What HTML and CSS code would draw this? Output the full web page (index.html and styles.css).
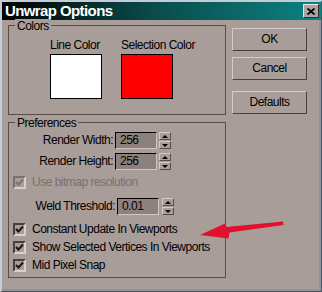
FILE: index.html
```html
<html>
<head>
<meta charset="UTF-8">
<link rel="stylesheet" href="styles.css">
</head>
<body>
<div class="window">
    <div class="titlebar">
        <span class="title">Unwrap Options</span>
        <div class="close">
            <svg width="8" height="7" viewBox="0 0 8 7"><path d="M0.5 0.5 L7.5 6.5 M7.5 0.5 L0.5 6.5" stroke="#000" stroke-width="1.8"/></svg>
        </div>
    </div>
    <div class="content">
        <div class="groups">
            <div class="group colors">
                <span class="legend">Colors</span>
                <div class="swatch_col">
                    <span class="swatch_label">Line Color</span>
                    <div class="swatch white"></div>
                </div>
                <div class="swatch_col">
                    <span class="swatch_label">Selection Color</span>
                    <div class="swatch red"></div>
                </div>
            </div>
            <div class="group prefs">
                <span class="legend">Preferences</span>
                <div class="field first">
                    <span class="field_label">Render Width:</span>
                    <div class="input">256</div>
                    <div class="spinner"><div class="spin up"></div><div class="spin down"></div></div>
                </div>
                <div class="field second">
                    <span class="field_label">Render Height:</span>
                    <div class="input">256</div>
                    <div class="spinner"><div class="spin up"></div><div class="spin down"></div></div>
                </div>
                <div class="check_row disabled bitmap">
                    <div class="checkbox"><svg width="9" height="9" viewBox="0 0 9 9"><polyline points="1,4 3.5,6.5 8,1.5" fill="none" stroke="currentColor" stroke-width="2"/></svg></div>
                    <span>Use bitmap resolution</span>
                </div>
                <div class="field weld">
                    <span class="field_label">Weld Threshold:</span>
                    <div class="input">0.01</div>
                    <div class="spinner"><div class="spin up"></div><div class="spin down"></div></div>
                </div>
                <div class="check_row first_check">
                    <div class="checkbox"><svg width="9" height="9" viewBox="0 0 9 9"><polyline points="1,4 3.5,6.5 8,1.5" fill="none" stroke="currentColor" stroke-width="2"/></svg></div>
                    <span>Constant Update In Viewports</span>
                </div>
                <div class="check_row">
                    <div class="checkbox"><svg width="9" height="9" viewBox="0 0 9 9"><polyline points="1,4 3.5,6.5 8,1.5" fill="none" stroke="currentColor" stroke-width="2"/></svg></div>
                    <span>Show Selected Vertices In Viewports</span>
                </div>
                <div class="check_row">
                    <div class="checkbox"><svg width="9" height="9" viewBox="0 0 9 9"><polyline points="1,4 3.5,6.5 8,1.5" fill="none" stroke="currentColor" stroke-width="2"/></svg></div>
                    <span>Mid Pixel Snap</span>
                </div>
            </div>
        </div>
        <div class="buttons">
            <div class="button ok">OK</div>
            <div class="button cancel">Cancel</div>
            <div class="button defaults">Defaults</div>
        </div>
    </div>
    <!-- annotation arrow drawn over the dialog -->
    <svg class="arrow" width="322" height="292" viewBox="0 0 322 292">
        <polygon points="283,221.5 226.5,227 225,223.5 200,235 228.5,238.5 229.5,232.5 283.5,225" fill="#e2102e"/>
    </svg>
</div>
</body>
</html>
```

FILE: styles.css
```css
* {
    box-sizing: border-box;
}

body {
    margin: 0;
    font-family: "Liberation Sans", Arial, sans-serif;
    font-size: 12px;
    letter-spacing: -0.5px;
    line-height: 15px;
    white-space: nowrap;
    color: #000;
}

.window {
    position: relative;
    width: 322px;
    height: 292px;
    background: #a99d99;
    border-left: 2px solid #c4ccd8;
    border-top: 2px solid #c4ccd8;
    border-right: 1px solid #4c5462;
    border-bottom: 1px solid #4c5462;
    box-shadow: inset -2px -2px 0 #8a94a4;
    overflow: hidden;
}

.titlebar {
    display: flex;
    align-items: center;
    justify-content: space-between;
    height: 18px;
    padding-left: 3px;
    padding-right: 2px;
    background: linear-gradient(to right, #000000, #0a4848 45%, #0c8282);
}

.title {
    color: #fff;
    font-weight: bold;
    font-size: 15px;
    letter-spacing: -0.6px;
    line-height: 18px;
}

.close {
    display: flex;
    align-items: center;
    justify-content: center;
    width: 16px;
    height: 14px;
    background: #aaa4a2;
    border-top: 1px solid #e8e8e8;
    border-left: 1px solid #e8e8e8;
    border-right: 1px solid #303030;
    border-bottom: 1px solid #303030;
}

.content {
    display: flex;
    gap: 6px;
    padding: 5px 0 0 6px;
}

.groups {
    display: flex;
    flex-direction: column;
    gap: 7px;
    width: 218px;
}

.group {
    position: relative;
    border: 1px solid #5c4c48;
}

.legend {
    position: absolute;
    top: -7px;
    left: 6px;
    padding: 0 2px;
    background: #a99d99;
}

.colors {
    display: flex;
    gap: 19px;
    height: 90px;
    padding: 12px 0 0 41px;
}

.swatch_col {
    display: flex;
    flex-direction: column;
    gap: 1px;
}

.swatch {
    width: 52px;
    height: 45px;
    border: 1px solid #000;
}

.white {
    background: #fff;
}

.red {
    background: #ff0000;
}

.prefs {
    height: 156px;
    padding: 9px 0 0 0;
}

.field {
    display: flex;
    align-items: center;
    height: 17px;
}

.second {
    margin-top: 4px;
}

.weld {
    margin-top: 8px;
}

.field_label {
    width: 104px;
    text-align: right;
    margin-right: 2px;
}

.weld .field_label {
    width: 106px;
}

.input {
    width: 42px;
    height: 17px;
    padding-left: 4px;
    background: #8d807d;
    border-top: 1px solid #000;
    border-left: 1px solid #000;
    border-right: 1px solid #d2c6c2;
    border-bottom: 1px solid #d2c6c2;
}

.spinner {
    display: flex;
    flex-direction: column;
    gap: 1px;
    width: 12px;
    height: 17px;
    margin-left: 2px;
}

.weld .spinner {
    margin-left: 3px;
}

.spin {
    position: relative;
    flex: 1;
    border-top: 1px solid #d6cac6;
    border-left: 1px solid #d6cac6;
    border-right: 1px solid #5c4c48;
    border-bottom: 1px solid #5c4c48;
}

.spin::after {
    content: "";
    position: absolute;
    left: 2px;
    top: 2px;
    border-left: 3px solid transparent;
    border-right: 3px solid transparent;
}

.up::after {
    border-bottom: 3px solid #000;
}

.down::after {
    top: 2px;
    border-top: 3px solid #000;
}

.check_row {
    display: flex;
    align-items: center;
    gap: 6px;
    height: 15px;
    padding-left: 4px;
    margin-top: 3px;
}

.bitmap {
    margin-top: 5px;
}

.first_check {
    margin-top: 7px;
}

.checkbox {
    display: flex;
    align-items: center;
    justify-content: center;
    width: 13px;
    height: 13px;
    color: #1a1412;
    background: #a99d99;
    border-top: 2px solid #4c3e3a;
    border-left: 2px solid #4c3e3a;
    border-right: 2px solid #dccfcb;
    border-bottom: 2px solid #dccfcb;
}

.disabled {
    color: #7c706c;
}

.disabled .checkbox {
    color: #7c706c;
    border-top-color: #7c706c;
    border-left-color: #7c706c;
}

.buttons {
    display: flex;
    flex-direction: column;
    width: 75px;
    padding-top: 3px;
}

.button {
    display: flex;
    align-items: center;
    justify-content: center;
    height: 23px;
    border-top: 1px solid #d6cac6;
    border-left: 1px solid #d6cac6;
    border-right: 1px solid #4c3e3a;
    border-bottom: 1px solid #4c3e3a;
}

.cancel {
    margin-top: 6px;
}

.defaults {
    margin-top: 11px;
}

.arrow {
    position: absolute;
    left: -2px;
    top: -2px;
    pointer-events: none;
}
```
